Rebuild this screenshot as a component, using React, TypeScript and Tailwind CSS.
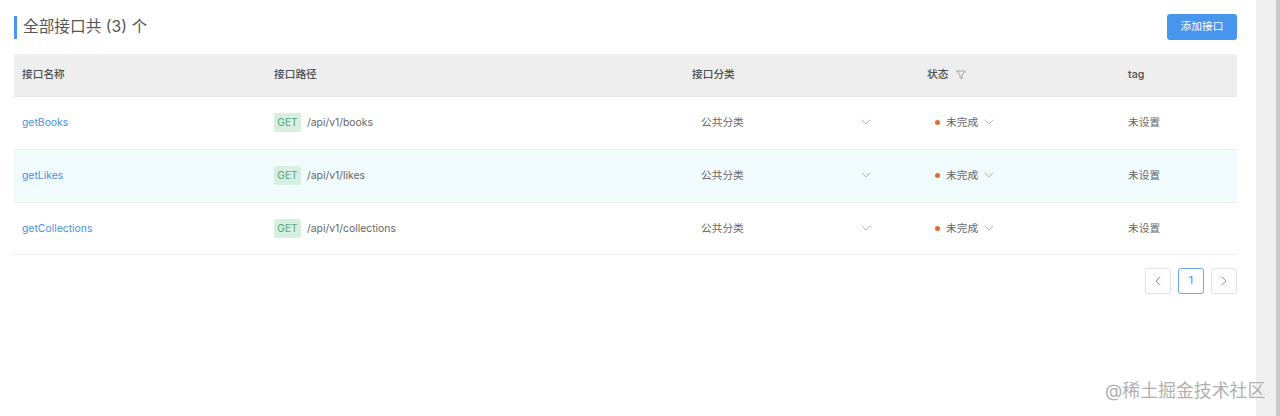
import React from 'react';
import { ChevronDown, ChevronLeft, ChevronRight } from 'lucide-react';

const FONT = "font-['Inter','Liberation_Sans','Noto_Sans_CJK_SC',sans-serif]";

const rows = [
  { name: 'getBooks', path: '/api/v1/books', hover: false, height: 'h-[53px] pb-[1px]' },
  { name: 'getLikes', path: '/api/v1/likes', hover: true, height: 'h-[53px] pb-[1px]' },
  { name: 'getCollections', path: '/api/v1/collections', hover: false, height: 'h-[52px]' },
];

const gridCols = 'grid grid-cols-[252px_418px_235px_201px_117px]';

const FilterIcon = () => (
  <svg width="10" height="10" viewBox="0 0 10 10" fill="none" stroke="#9a9a9a" strokeWidth="0.9">
    <path d="M0.7 1h8.6L6 5v3.8L4 8V5z" />
  </svg>
);

const Row: React.FC<{ name: string; path: string; hover: boolean; height: string }> = ({ name, path, hover, height }) => (
  <div className={`${gridCols} ${height} items-center border-b border-[#ececec] text-[10.7px] text-[#666666] ${hover ? 'bg-[#f1fafd]' : 'bg-white'}`}>
    <a className="pl-2 text-[10.4px] text-[#4a90e2]">{name}</a>
    <div className="flex items-center pl-2">
      <span className="flex h-[19px] w-[27px] items-center justify-center rounded-[2px] bg-[#d6efe0] text-[10.2px] text-[#5ba476]">GET</span>
      <span className="ml-[6px] pt-[1px] text-[10.4px]">{path}</span>
    </div>
    <div className="flex items-center justify-between pl-[17px] pr-[45px]">
      <span className="pt-[2px]">公共分类</span>
      <ChevronDown size={16} strokeWidth={1.3} color="#a8a8a8" />
    </div>
    <div className="flex items-center pl-[16px]">
      <span className="h-[5px] w-[5px] rounded-full bg-[#e8692f]" />
      <span className="ml-[6px] pt-[2px]">未完成</span>
      <ChevronDown size={16} strokeWidth={1.3} color="#a8a8a8" className="ml-[3px]" />
    </div>
    <div className="pl-2 pt-[2px]">未设置</div>
  </div>
);

export default function App() {
  return (
    <div className={`${FONT} relative flex h-[416px] w-[1280px] overflow-hidden bg-white`}>
      <main className="w-[1256px] px-[14px] pt-[14px]">
        <div className="flex h-[26px] w-[1223px] items-center justify-between">
          <h2 className="flex h-[23px] items-center border-l-[3px] border-[#4a96ee] pl-[6px] text-[15.7px] font-normal text-[#555555]">
            全部接口共 (3) 个
          </h2>
          <button className="flex h-[26px] w-[70px] items-center justify-center rounded-[3px] bg-[#4795ec] text-[10.7px] text-white">
            添加接口
          </button>
        </div>

        <div className="mt-[14px] w-[1223px]">
          <div className={`${gridCols} h-[43px] items-center rounded-t-[2px] border-b border-[#e6e6e6] bg-[#eeeeee] text-[10.7px] font-medium text-[#4f4f4f]`}>
            <div className="pl-2">接口名称</div>
            <div className="pl-2">接口路径</div>
            <div className="pl-2">接口分类</div>
            <div className="flex items-center pl-2">
              状态
              <span className="ml-[8px] flex"><FilterIcon /></span>
            </div>
            <div className="pl-2">tag</div>
          </div>
          {rows.map(r => (
            <Row key={r.name} {...r} />
          ))}
        </div>

        <div className="mt-[13px] flex w-[1223px] justify-end gap-[7px]">
          <button className="flex h-[26px] w-[26px] items-center justify-center rounded-[3px] border border-[#e0e0e0] bg-white">
            <ChevronLeft size={16} strokeWidth={1.4} color="#8f8f8f" />
          </button>
          <button className="flex h-[26px] w-[26px] items-center justify-center rounded-[3px] border border-[#6aa5e8] bg-white text-[10.7px] text-[#4a90e2]">
            1
          </button>
          <button className="flex h-[26px] w-[26px] items-center justify-center rounded-[3px] border border-[#e0e0e0] bg-white">
            <ChevronRight size={16} strokeWidth={1.4} color="#8f8f8f" />
          </button>
        </div>
      </main>

      <div className="w-[20px] bg-[#efefef]" />
      <div className="w-[4px] bg-[#c9c9c9]" />

      <span className="absolute left-[1105px] top-[379px] text-[17.9px] leading-[24px] text-[#b0b0b0]">
        @稀土掘金技术社区
      </span>
    </div>
  );
}
